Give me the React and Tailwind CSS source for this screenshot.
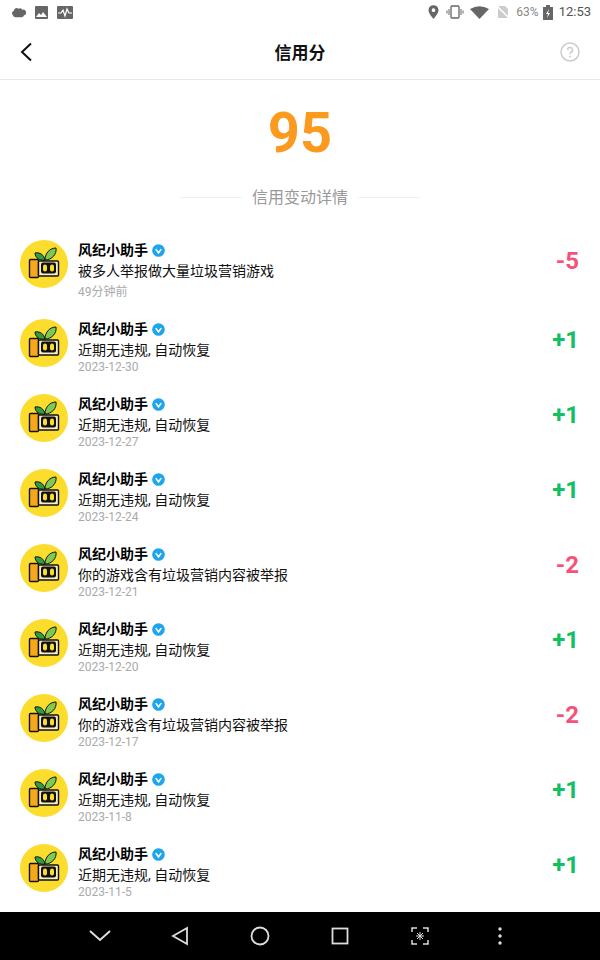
import React from 'react';

const records = [
  { text: '被多人举报做大量垃圾营销游戏', time: '49分钟前', score: '-5', first: true },
  { text: '近期无违规, 自动恢复', time: '2023-12-30', score: '+1' },
  { text: '近期无违规, 自动恢复', time: '2023-12-27', score: '+1' },
  { text: '近期无违规, 自动恢复', time: '2023-12-24', score: '+1' },
  { text: '你的游戏含有垃圾营销内容被举报', time: '2023-12-21', score: '-2' },
  { text: '近期无违规, 自动恢复', time: '2023-12-20', score: '+1' },
  { text: '你的游戏含有垃圾营销内容被举报', time: '2023-12-17', score: '-2' },
  { text: '近期无违规, 自动恢复', time: '2023-11-8', score: '+1' },
  { text: '近期无违规, 自动恢复', time: '2023-11-5', score: '+1' },
];

const Avatar = () => (
  <svg width="48" height="48" viewBox="0 0 48 48" className="shrink-0">
    <circle cx="24" cy="24" r="24" fill="#fcdc2c" />
    {/* sprout */}
    <path d="M25 20 C24 15 20 12 15 13 C15 18 20 21 25 20Z" fill="#2f9e3f" stroke="#111" strokeWidth="1" />
    <path d="M25 20 C25 13 30 8 36 8 C37 14 32 20 25 20Z" fill="#7ccb4e" stroke="#111" strokeWidth="1" />
    {/* body */}
    <rect x="9.500" y="19.500" width="9" height="18" rx="1" fill="#f6a81c" stroke="#111" strokeWidth="1.400" />
    <rect x="18.500" y="21" width="20" height="15" rx="1" fill="#f4efc8" stroke="#111" strokeWidth="1.400" />
    <rect x="21" y="22.500" width="15" height="11" rx="2" fill="#111" />
    <rect x="23" y="24.500" width="4" height="7" rx="2" fill="#fcdc2c" />
    <rect x="30" y="24.500" width="4" height="7" rx="2" fill="#fcdc2c" />
  </svg>
);

const Verified = () => (
  <svg width="13" height="13" viewBox="0 0 14 14" className="ml-[4px]">
    <circle cx="7" cy="7" r="6.800" fill="#1da5ee" />
    <path d="M4 5.500 L7 9.500 L10 5.500" fill="none" stroke="#fff" strokeWidth="1.700" />
  </svg>
);

const Row = ({ item }) => {
  const color = item.score.startsWith('+') ? 'text-[#10c063]' : 'text-[#f5527a]';
  return (
    <div className={`flex pl-[20px] pr-[21px] ${item.first ? 'h-[79px]' : 'h-[75px]'}`}>
      <Avatar />
      <div className="ml-[10px] flex-1 min-w-0">
        <div className="flex items-center h-[20px]">
          <span className="text-[14px] leading-[20px] font-bold text-black">风纪小助手</span>
          <Verified />
        </div>
        <div className="text-[14px] leading-[20px] mt-px text-[#111]">{item.text}</div>
        <div className={`text-[12px] leading-[14px] text-[#aaa] ${item.first ? 'mt-[4px]' : 'mt-0'}`}>{item.time}</div>
      </div>
      <div className={`text-[24px] leading-[28px] font-bold mt-[7px] ${color}`}>{item.score}</div>
    </div>
  );
};

export default function App() {
  return (
    <div className="w-[600px] h-[960px] bg-white flex flex-col overflow-hidden font-['Roboto','Noto_Sans_CJK_SC',sans-serif]">
      {/* Status bar */}
      <div className="h-[24px] flex items-center justify-between pl-[11px] pr-[9px]">
        <div className="flex items-center gap-[9px]">
          <svg width="15" height="13" viewBox="0 0 16 14"><path d="M3 5a3 3 0 0 1 5-2 3 3 0 0 1 4 1 3 3 0 0 1 2 6 3 3 0 0 1-3 2H5a3 3 0 0 1-3-2 3 3 0 0 1 1-5Z" fill="#666" /></svg>
          <svg width="13" height="13" viewBox="0 0 13 13"><rect width="13" height="13" rx="1" fill="#666" /><path d="M1 11 4 7l2 2 2-3 4 5Z" fill="#fff" /></svg>
          <svg width="16" height="13" viewBox="0 0 16 13"><rect width="16" height="13" rx="1" fill="#666" /><path d="M1 7h3l2-3 2 6 2-7 2 4h3" fill="none" stroke="#fff" strokeWidth="1.200" /></svg>
        </div>
        <div className="flex items-center text-[#666]">
          <svg width="11" height="14" viewBox="0 0 12 15"><path fillRule="evenodd" d="M6 0a5.500 5.500 0 0 1 5.500 5.500C11.500 9 6 15 6 15S.5 9 .5 5.500A5.500 5.500 0 0 1 6 0Zm0 3.500a2 2 0 1 0 0 4 2 2 0 0 0 0-4Z" fill="#666" /></svg>
          <svg width="18" height="14" viewBox="0 0 18 14" className="ml-[7px]"><rect x="5" y="1" width="8" height="12" rx="1" fill="none" stroke="#666" strokeWidth="1.300" /><path d="M3 4v6M1 5.500v3M15 4v6M17 5.500v3" stroke="#666" /></svg>
          <svg width="19" height="13" viewBox="0 0 19 13" className="ml-[6px]"><path d="M0 3Q9.500-2.500 19 3l-9.500 10Z" fill="#666" /></svg>
          <svg width="14" height="14" viewBox="0 0 14 14" className="ml-[7px]"><path d="M2 1h7l3 3v9H2Z" fill="#ccc" /><path d="M1 1l12 12" stroke="#fff" strokeWidth="1.500" /></svg>
          <span className="ml-[6px] text-[12px] leading-[14px] text-[#888]">63%</span>
          <svg width="10" height="15" viewBox="0 0 10 15" className="ml-[4px]"><path d="M3 0h4v2h3v13H0V2h3Z" fill="#666" /><path d="M6 4 3 9h2l-1 4 3-5H5Z" fill="#fff" /></svg>
          <span className="ml-[6px] text-[13px] leading-[14px] text-[#555]">12:53</span>
        </div>
      </div>

      {/* Header */}
      <div className="h-[56px] flex items-center justify-between border-b border-[#e8e8e8] pl-[20px] pr-[20px]">
        <div className="w-[20px]">
          <svg width="12" height="20" viewBox="0 0 12 20"><path d="M11 1.500 2 10l9 8.500" fill="none" stroke="#111" strokeWidth="2" /></svg>
        </div>
        <span className="text-[17px] leading-[24px] pt-[2px] font-bold text-[#111]">信用分</span>
        <svg width="20" height="20" viewBox="0 0 20 20">
          <circle cx="10" cy="10" r="9" fill="none" stroke="#ccc" strokeWidth="1.500" />
          <path d="M7.500 8a2.500 2.500 0 1 1 3.500 2.300c-.7.4-1 .8-1 1.700" fill="none" stroke="#ccc" strokeWidth="1.500" />
          <circle cx="10" cy="14.500" r="1" fill="#ccc" />
        </svg>
      </div>

      {/* Score */}
      <div className="h-[160px] flex flex-col items-center">
        <div className="mt-[20px] text-[56px] leading-[66px] font-bold text-[#fb9a1e]">95</div>
        <div className="mt-[21px] flex items-center">
          <div className="w-[62px] h-px mb-[2px] bg-[#f0f0f0]" />
          <span className="mx-[10px] text-[16px] leading-[22px] text-[#999]">信用变动详情</span>
          <div className="w-[62px] h-px mb-[2px] bg-[#f0f0f0]" />
        </div>
      </div>

      {/* Records */}
      <div className="flex-1 overflow-hidden">
        {records.map((item, i) => <Row key={i} item={item} />)}
      </div>

      {/* Nav bar */}
      <div className="h-[48px] bg-black flex items-center pl-[60px]">
        <div className="w-[80px] flex justify-center"><svg width="24" height="14" viewBox="0 0 24 14"><path d="M2 2l10 9 10-9" fill="none" stroke="#ddd" strokeWidth="2" /></svg></div>
        <div className="w-[80px] flex justify-center"><svg width="18" height="20" viewBox="0 0 18 20"><path d="M16 2v16L2 10Z" fill="none" stroke="#ddd" strokeWidth="1.800" /></svg></div>
        <div className="w-[80px] flex justify-center"><svg width="20" height="20" viewBox="0 0 20 20"><circle cx="10" cy="10" r="8.500" fill="none" stroke="#ddd" strokeWidth="1.800" /></svg></div>
        <div className="w-[80px] flex justify-center"><svg width="18" height="18" viewBox="0 0 18 18"><rect x="1.500" y="1.500" width="15" height="15" fill="none" stroke="#ddd" strokeWidth="1.800" /></svg></div>
        <div className="w-[80px] flex justify-center"><svg width="18" height="18" viewBox="0 0 18 18"><path d="M1 5V1h5M12 1h5v4M17 13v4h-5M6 17H1v-4" fill="none" stroke="#ddd" strokeWidth="1.500" /><path d="M9 5v8M5 9h8M6 6l6 6M12 6l-6 6" stroke="#ddd" /></svg></div>
        <div className="w-[80px] flex justify-center"><svg width="4" height="18" viewBox="0 0 4 18"><circle cx="2" cy="2" r="1.700" fill="#ddd" /><circle cx="2" cy="9" r="1.700" fill="#ddd" /><circle cx="2" cy="16" r="1.700" fill="#ddd" /></svg></div>
      </div>
    </div>
  );
}
